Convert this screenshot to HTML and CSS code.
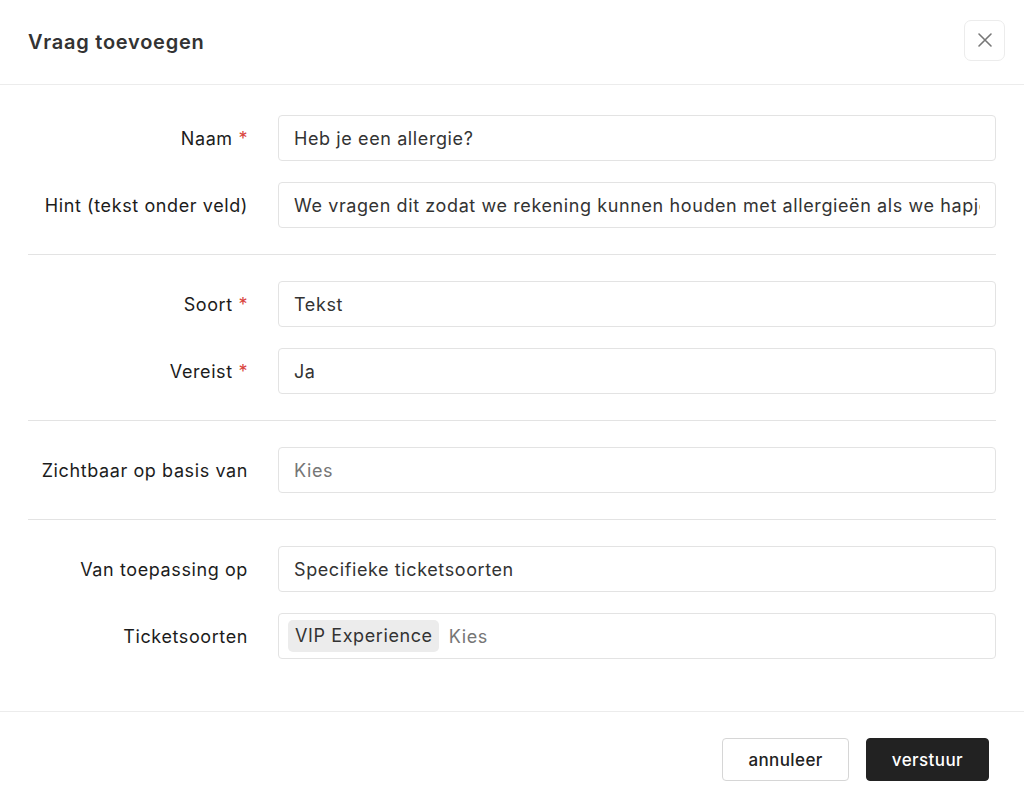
FILE: index.html
```html
<!DOCTYPE html>
<html lang="nl">
<head>
  <meta charset="UTF-8">
  <meta name="viewport" content="width=device-width, initial-scale=1.0">
  <title>Vraag toevoegen</title>
  <link rel="stylesheet" href="styles.css">
</head>
<body>
  <div class="modal">
    <div class="modal-header">
      <h2>Vraag toevoegen</h2>
      <button class="close-btn" type="button" aria-label="Sluiten">
        <svg width="18" height="18" viewBox="0 0 18 18" fill="none" stroke="#777" stroke-width="1.6" stroke-linecap="round">
          <path d="M3 3L15 15M15 3L3 15"/>
        </svg>
      </button>
    </div>

    <form class="modal-body">
      <div class="field-group">
        <label class="label" for="naam">Naam <span class="req">*</span></label>
        <input class="input" id="naam" type="text" value="Heb je een allergie?">
        <label class="label" for="hint">Hint (tekst onder veld)</label>
        <input class="input" id="hint" type="text" value="We vragen dit zodat we rekening kunnen houden met allergieën als we hapjes serveren">
      </div>

      <hr class="divider">

      <div class="field-group">
        <label class="label">Soort <span class="req">*</span></label>
        <div class="select">Tekst</div>
        <label class="label">Vereist <span class="req">*</span></label>
        <div class="select">Ja</div>
      </div>

      <hr class="divider">

      <div class="field-group">
        <label class="label">Zichtbaar op basis van</label>
        <div class="select placeholder">Kies</div>
      </div>

      <hr class="divider">

      <div class="field-group">
        <label class="label">Van toepassing op</label>
        <div class="select">Specifieke ticketsoorten</div>
        <label class="label">Ticketsoorten</label>
        <div class="select multi">
          <span class="chip">VIP Experience</span>
          <span class="placeholder">Kies</span>
        </div>
      </div>
    </form>

    <div class="modal-footer">
      <button class="btn" type="button">annuleer</button>
      <button class="btn btn-primary" type="button">verstuur</button>
    </div>
  </div>
</body>
</html>
```

FILE: styles.css
```css
body {
  margin: 0;
  font-family: Inter, "Noto Sans", sans-serif;
  background-color: #fff;
  color: #1c1c1c;
}
.modal {
  width: 1024px;
  height: 806px;
  display: flex;
  flex-direction: column;
  background-color: #fff;
}
.modal-header {
  height: 85px;
  box-sizing: border-box;
  display: flex;
  align-items: center;
  justify-content: space-between;
  padding: 0 19px 0 28px;
  border-bottom: 1px solid #ececec;
}
.modal-header h2 {
  margin: 0;
  font-size: 20px;
  font-weight: 600;
  letter-spacing: 0.75px;
  color: #333;
}
.close-btn {
  width: 41px;
  height: 41px;
  display: flex;
  align-items: center;
  justify-content: center;
  background: #fff;
  border: 1px solid #ececec;
  border-radius: 7px;
  padding: 0;
  margin-bottom: 4px;
  cursor: pointer;
}
.modal-body {
  flex: 1;
  padding: 30px 28px 0 28px;
}
.field-group {
  display: grid;
  grid-template-columns: 220px 1fr;
  column-gap: 30px;
  row-gap: 21px;
  align-items: center;
}
.label {
  text-align: right;
  font-size: 18px;
  letter-spacing: 0.6px;
  color: #1c1c1c;
}
.req {
  color: #d9443d;
}
.input,
.select {
  width: 100%;
  height: 46px;
  box-sizing: border-box;
  display: flex;
  align-items: center;
  margin: 0;
  padding: 0 15px;
  border: 1px solid #e3e3e3;
  border-radius: 4px;
  font-family: inherit;
  font-size: 18px;
  letter-spacing: 0.6px;
  color: #333;
  background: #fff;
  white-space: nowrap;
  overflow: hidden;
  outline: none;
}
.placeholder {
  color: #767676;
}
.multi {
  padding-left: 9px;
  gap: 10px;
}
.chip {
  background-color: #ececec;
  border-radius: 5px;
  padding: 5px 6px 6px 7px;
  color: #333;
}
.divider {
  margin: 26px 0;
  border: 0;
  border-top: 1px solid #e3e3e3;
}
.modal-footer {
  height: 95px;
  box-sizing: border-box;
  display: flex;
  justify-content: flex-end;
  align-items: flex-start;
  gap: 17px;
  padding: 26px 35px 0 0;
  border-top: 1px solid #ececec;
}
.btn {
  height: 43px;
  padding: 0 25px;
  font-family: inherit;
  font-size: 17px;
  font-weight: 500;
  letter-spacing: 0.4px;
  color: #222;
  background-color: #fff;
  border: 1px solid #d6d6d6;
  border-radius: 4px;
  cursor: pointer;
}
.btn-primary {
  background-color: #222;
  border-color: #222;
  color: #fff;
}
```
